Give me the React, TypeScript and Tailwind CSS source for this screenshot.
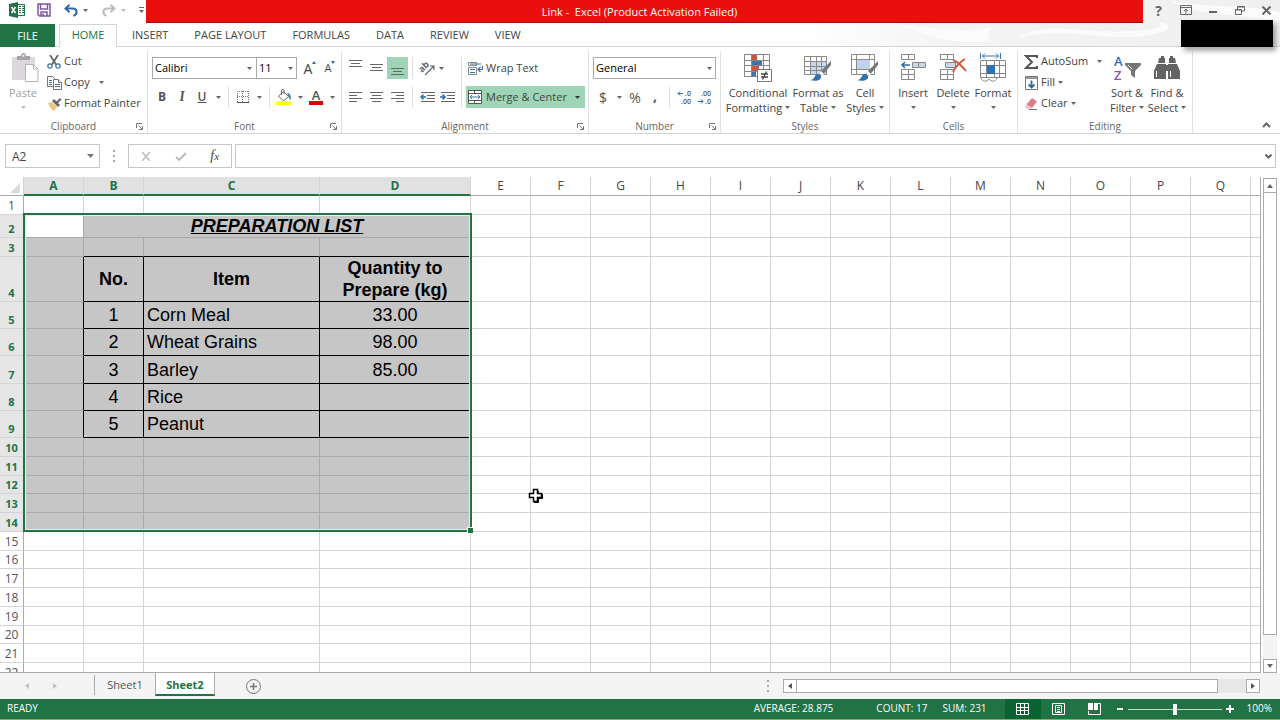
import type { ReactNode } from 'react';

const menuTabs = ['INSERT', 'PAGE LAYOUT', 'FORMULAS', 'DATA', 'REVIEW', 'VIEW'];

const columns = [
    { name: 'A', width: 'w-[60px]' },
    { name: 'B', width: 'w-[60px]' },
    { name: 'C', width: 'w-[176px]' },
    { name: 'D', width: 'w-[151px]' },
    ...['E', 'F', 'G', 'H', 'I', 'J', 'K', 'L', 'M', 'N', 'O', 'P', 'Q'].map((name) => ({ name, width: 'w-[60px]' })),
];

const rowHeights = [19, 23, 19, 45, 27, 27, 28, 27, 27, 19, 19, 18, 19, 19, 19, 18, 19, 19, 19, 18, 19, 19];

const cells: Record<string, string> = {
    B4: 'No.', C4: 'Item', D4: 'Quantity to Prepare (kg)',
    B5: '1', C5: 'Corn Meal', D5: '33.00',
    B6: '2', C6: 'Wheat Grains', D6: '98.00',
    B7: '3', C7: 'Barley', D7: '85.00',
    B8: '4', C8: 'Rice',
    B9: '5', C9: 'Peanut',
};

function Caret({ className = 'text-[#666]' }: { className?: string }) {
    return (
        <svg width="5" height="3" viewBox="0 0 5 3" className={`shrink-0 ${className}`}>
            <path d="M0 0h5L2.5 3z" fill="currentColor" />
        </svg>
    );
}

function CaretButton({ label, className = 'w-[12px]' }: { label: string; className?: string }) {
    return (
        <button aria-label={label} className={`flex h-[22px] items-center justify-center ${className}`}>
            <Caret />
        </button>
    );
}

function IconButton({ label, className = 'w-[20px]', children }: { label: string; className?: string; children: ReactNode }) {
    return (
        <button aria-label={label} className={`flex h-[22px] items-center justify-center ${className}`}>
            {children}
        </button>
    );
}

function Separator() {
    return <div className="mx-1 h-[22px] w-px bg-[#e1e1e1]" />;
}

function Group({ label, width, launcher, children }: { label: string; width: string; launcher?: boolean; children: ReactNode }) {
    return (
        <section aria-label={label} className={`flex shrink-0 flex-col ${width}`}>
            <div className="flex h-[82px] flex-col border-r border-[#e1e1e1]">
                <div className="flex grow">{children}</div>
                <div className="relative h-[14px] text-center text-[10px] leading-[14px] text-[#666]">
                    <span>{label}</span>
                    {launcher && (
                        <button aria-label={`${label} settings`} className="absolute right-1 top-1">
                            <svg width="7" height="7" viewBox="0 0 7 7" fill="none" stroke="#777">
                                <path d="M.5 5V.5H6M2.5 2.5l4 4M6.5 3v3.5H3" />
                            </svg>
                        </button>
                    )}
                </div>
            </div>
        </section>
    );
}

function BigButton({ icon, lines, width }: { icon: ReactNode; lines: string[]; width: string }) {
    return (
        <button className={`flex flex-col items-center whitespace-nowrap text-[11px] leading-[15px] ${width}`}>
            <span className="flex h-[34px] items-center justify-center">{icon}</span>
            <span>{lines[0]}</span>
            <span className="flex h-[15px] items-center gap-[3px]">
                {lines[1]}
                <Caret />
            </span>
        </button>
    );
}

function SmallButton({ icon, label, caret }: { icon: ReactNode; label: string; caret?: string }) {
    return (
        <button className="flex h-[21px] items-center whitespace-nowrap text-[11px]">
            <span className="mr-[2px] flex w-[16px] justify-center">{icon}</span>
            {label}
            {caret && <span className={caret}><Caret /></span>}
        </button>
    );
}

/* ---- icons ---- */

function ExcelIcon() {
    return (
        <svg width="16" height="16" viewBox="0 0 16 16">
            <path d="M9 2.5h6.5v11H9" fill="#fff" stroke="#217346" />
            <path d="M10 4.5h2m1 0h2M10 6.5h2m1 0h2M10 8.5h2m1 0h2M10 10.5h2m1 0h2" stroke="#217346" />
            <path d="M0 2l9-2v16l-9-2z" fill="#217346" />
            <path d="M2.5 5l4 6M6.5 5l-4 6" stroke="#fff" strokeWidth="1.5" />
        </svg>
    );
}

function SaveIcon() {
    return (
        <svg width="14" height="14" viewBox="0 0 14 14" fill="none" stroke="#8056a0" strokeWidth="1.5">
            <path d="M1 1h12v12H2.5L1 11.5zM3.5 1v5h7V1M4 13V9h6v4" />
            <path d="M6 10.5V13" />
        </svg>
    );
}

function UndoIcon({ color, flip }: { color: string; flip?: boolean }) {
    return (
        <svg width="14" height="13" viewBox="0 0 14 13" fill="none" stroke={color} strokeWidth="2" className={flip ? '-scale-x-100' : ''}>
            <path d="M2 4.5h6.5c5 0 5.5 5 1 7.5" />
            <path d="M5.5.8L1.5 4.5l4 3.7" />
        </svg>
    );
}

function PasteIcon() {
    return (
        <svg width="28" height="30" viewBox="0 0 28 30">
            <path d="M1 4h23v23H1z" fill="#dcd8dd" />
            <path d="M6 3h4c0-4 5-4 5 0h4v4H6z" fill="#a5a5a5" />
            <circle cx="12.5" cy="2.8" r="1" fill="#fff" />
            <path d="M14.5 11.5h8l4.5 4.5v12.5H14.5z" fill="#fff" stroke="#b5b5b5" />
            <path d="M22.5 11.5V16H27" fill="none" stroke="#b5b5b5" />
        </svg>
    );
}

function CutIcon() {
    return (
        <svg width="14" height="14" viewBox="0 0 14 14" fill="none">
            <path d="M3 0l6 9.5M11 0L5 9.5" stroke="#666" strokeWidth="1.8" />
            <circle cx="3" cy="11" r="2.2" stroke="#41719c" strokeWidth="1.2" />
            <circle cx="11" cy="11" r="2.2" stroke="#41719c" strokeWidth="1.2" />
        </svg>
    );
}

function CopyIcon() {
    return (
        <svg width="15" height="14" viewBox="0 0 15 14" fill="#fff" stroke="#777">
            <path d="M.5.5h5l2 2v8h-7z" />
            <path d="M2 4.5h3M2 6.5h3M2 8.5h3" stroke="#41719c" />
            <path d="M6.5 3.5h5l3 3v7h-8z" />
            <path d="M11.5 3.5v3h3" />
            <path d="M8 8.5h5M8 10.5h5" stroke="#41719c" />
        </svg>
    );
}

function PainterIcon() {
    return (
        <svg width="15" height="14" viewBox="0 0 15 14">
            <path d="M1 6l4-1 5 5-3 4c-2-1-4-3-6-8z" fill="#efc37f" />
            <path d="M5 4l2-2 6 6-2 2z" fill="#666" />
            <path d="M9 5l4-4 1.500 1.500-4 4z" fill="#666" />
        </svg>
    );
}

function LinesIcon({ lines }: { lines: [number, number, number][] }) {
    return (
        <svg width="13" height="12" viewBox="0 0 13 12" stroke="#666">
            {lines.map(([x1, x2, y]) => (
                <path key={y} d={`M${x1} ${y}.5H${x2}`} />
            ))}
        </svg>
    );
}

function IndentIcon({ right }: { right?: boolean }) {
    return (
        <svg width="15" height="12" viewBox="0 0 15 12" fill="none" stroke="#666">
            <path d="M1 1.5h14M7 4.5h8M7 7.5h8M1 10.5h14" />
            {right
                ? <path d="M0 6h5M2.5 3.5L5 6 2.5 8.5" stroke="#2f6aa8" strokeWidth="1.5" />
                : <path d="M6 6H1M3.5 3.5L1 6l2.5 2.5" stroke="#2f6aa8" strokeWidth="1.5" />}
        </svg>
    );
}

function BordersIcon() {
    return (
        <svg width="12" height="12" viewBox="0 0 12 12" fill="none" stroke="#777">
            <path d="M0 .5h12M.5 0v12M11.5 0v12M0 5.5h12M5.5 0v12" strokeDasharray="1 1" />
            <path d="M0 11.5h12" stroke="#555" />
        </svg>
    );
}

function BucketIcon() {
    return (
        <svg width="16" height="16" viewBox="0 0 16 16">
            <path d="M2.5 7l5-4.5 5 5-5 4.5z" fill="#fff" stroke="#666" />
            <path d="M5.5 6V1.5c0-1.5 2.5-1.5 2.5 0V5" fill="none" stroke="#666" />
            <path d="M11 4c3 0 4.5 3 3.5 7-1-1-1.5-2-2-4z" fill="#41719c" />
            <path d="M0 12.5h15V16H0z" fill="#ffff00" />
        </svg>
    );
}

function OrientationIcon() {
    return (
        <svg width="16" height="15" viewBox="0 0 16 15" fill="none" stroke="#666" className="overflow-visible">
            <text x="0" y="9" fontSize="9" fontWeight="700" fill="#666" stroke="none" transform="rotate(-45 5 7)">ab</text>
            <path d="M6 14l9-9M11 5h4v4" strokeWidth="1.2" />
        </svg>
    );
}

function WrapIcon() {
    return (
        <svg width="16" height="15" viewBox="0 0 16 15" fill="none" stroke="#41719c">
            <path d="M.5 1.5h8v3h-8zM.5 6.5h8v7h-8z" stroke="#888" />
            <path d="M2 3h11M2 8.5h5M2 11.5h5" strokeWidth="1.2" />
            <path d="M14.5 5v3.5H10M12.5 6L10 8.5l2.5 2.5" strokeWidth="1.2" />
        </svg>
    );
}

function MergeIcon() {
    return (
        <svg width="14" height="14" viewBox="0 0 14 14" fill="none" stroke="#555">
            <path d="M.5.5h13v13H.5z" fill="#fff" />
            <path d="M0 3.5h14M0 10.5h14M6.5 0v3.5M6.5 10.5V14" />
            <path d="M2 7h10M4 5L2 7l2 2M10 5l2 2-2 2" stroke="#41719c" />
        </svg>
    );
}

function DecimalIcon({ increase }: { increase?: boolean }) {
    return (
        <svg width="15" height="14" viewBox="0 0 15 14" fontSize="7" fontWeight="600" fill="#555" className="overflow-visible">
            <text x={increase ? 8 : 4} y="6">{increase ? '.0' : '.00'}</text>
            <text x={increase ? 4 : 8} y="14">{increase ? '.00' : '.0'}</text>
            {increase
                ? <path d="M6 3.5H1M3 1.5l-2 2 2 2" fill="none" stroke="#2f6aa8" />
                : <path d="M1 11.5h5M4 9.5l2 2-2 2" fill="none" stroke="#2f6aa8" />}
        </svg>
    );
}

function ConditionalIcon() {
    return (
        <svg width="28" height="29" viewBox="0 0 28 29" fill="none">
            <path d="M.5.5h25v22H.5zM.5 6.5h25M.5 11.5h25M.5 17.5h25M7.5.5v22M19.5.5v22" stroke="#888" />
            <path d="M8 1h5v5H8zM8 12h7v5H8z" fill="#d0553f" />
            <path d="M8 7h10v4H8zM8 18h4v4H8z" fill="#3c74b3" />
            <path d="M13.5 15.5h14v12h-14z" fill="#fff" stroke="#777" />
            <path d="M17 20h7M17 23h7M22.5 17.5l-4 8" stroke="#444" strokeWidth="1.3" />
        </svg>
    );
}

function Brush() {
    return (
        <>
            <path d="M27 7L15 19l3 3 9-11z" fill="#777" />
            <path d="M17 17l3 3-2 2-3-3z" fill="#fff" />
            <path d="M6 26c3 0 4-2 5-4s4-3 6 0c1 4-5 6-11 4z" fill="#2f72ad" />
        </>
    );
}

function FormatTableIcon() {
    return (
        <svg width="28" height="28" viewBox="0 0 28 28" fill="none">
            <path d="M6 8h17v12H6z" fill="#c8d8ec" />
            <path d="M.5 2.5h22v18H.5zM.5 7.5h22M.5 12.5h22M.5 16.5h22M6.5 2.5v18M12.5 2.5v18M17.5 2.5v18" stroke="#8a8a8a" />
            <Brush />
        </svg>
    );
}

function CellStylesIcon() {
    return (
        <svg width="28" height="28" viewBox="0 0 28 28" fill="none">
            <path d="M.5.5h23v20H.5zM.5 5.5h23M.5 15.5h23M5.5.5v20M18.5.5v20" stroke="#8a8a8a" />
            <path d="M6 6h13v9H6z" fill="#c0d3ee" />
            <Brush />
        </svg>
    );
}

function InsertIcon() {
    return (
        <svg width="26" height="28" viewBox="0 0 26 28" fill="#fff" stroke="#888">
            <path d="M1.5.5h13v5h-13zM8.5.5v5M1.5 15.5h13v10h-13zM8.5 15.5v10M1.5 20.5h13" />
            <path d="M12.5 8.5h13v5h-13z" fill="#c8d8e8" />
            <path d="M18.5 8.5v5" />
            <path d="M10 11H2M5 8l-3 3 3 3" fill="none" stroke="#2f6aa8" strokeWidth="1.5" />
        </svg>
    );
}

function DeleteIcon() {
    return (
        <svg width="28" height="28" viewBox="0 0 28 28" fill="#fff" stroke="#888">
            <path d="M1.5.5h13v5h-13zM8.5.5v5M1.5 15.5h13v10h-13zM8.5 15.5v10M1.5 20.5h13" />
            <path d="M6.5 8.5h10v5h-10z" fill="#c8d8e8" />
            <path d="M14 6c5 2 9 6 13 11M26 5c-5 3-9 7-12 13" fill="none" stroke="#d2583c" strokeWidth="2" />
        </svg>
    );
}

function FormatIcon() {
    return (
        <svg width="28" height="30" viewBox="0 0 28 30" fill="none" stroke="#888">
            <path d="M1.5 0v6M21.5 0v6M3 3h17M6 .5L3.5 3 6 5.5M17 .5L19.5 3 17 5.5" stroke="#3c74b3" />
            <path d="M1.5 7.5h25v17h-25zM1.5 12.5h25M1.5 20.5h25M7.5 7.5v17M15.5 7.5v17M20.5 7.5v17" />
            <path d="M8 12h8v9H8z" fill="#2f6fba" stroke="none" />
            <path d="M2 25c1 4 6 4 8 1 2 3 7 3 8-1" fill="#fff" />
        </svg>
    );
}

function FillIcon() {
    return (
        <svg width="13" height="14" viewBox="0 0 13 14" fill="none">
            <path d="M.5.5h12v13H.5z" stroke="#777" />
            <path d="M1 1h11v2H1z" fill="#999" />
            <path d="M6.5 4.5v7M3.5 8.5l3 3 3-3" stroke="#2f6aa8" strokeWidth="1.8" />
        </svg>
    );
}

function EraserIcon() {
    return (
        <svg width="13" height="12" viewBox="0 0 13 12">
            <path d="M7 0l5 3.5L7 10 1.5 6.5z" fill="#e0798c" />
            <path d="M1.5 6.5L7 10l-1 1H2L0 9z" fill="#f1c4cb" />
            <path d="M4 11.5h8" stroke="#777" />
        </svg>
    );
}

function SigmaIcon() {
    return (
        <svg width="14" height="14" viewBox="0 0 14 14" fill="none" stroke="#555" strokeWidth="2">
            <path d="M13 3V1H2l6 6-6 6h11v-2" />
        </svg>
    );
}

function SortIcon() {
    return (
        <svg width="28" height="28" viewBox="0 0 28 28" fontSize="13" fontWeight="600" className="overflow-visible">
            <text x="1" y="12" fill="#2f6fba">A</text>
            <text x="1" y="26" fill="#8c4fb0">Z</text>
            <path d="M12 9h16v2l-6 6v7l-4-3v-4l-6-6z" fill="#777" />
            <path d="M15 11l4 4" stroke="#fff" />
        </svg>
    );
}

function BinocularsIcon() {
    return (
        <svg width="26" height="24" viewBox="0 0 26 24" fill="#636363">
            <path d="M5 2h2V0h3v2h1v5H4zM15 2h1V0h3v2h2l1 5h-7z" />
            <path d="M3 8h9v15H0v-8zM14 8h9l3 7v8H14z" />
            <path d="M11 9h4v6h-4z" />
            <path d="M2.5 15v6M16.5 15v6" stroke="#fff" />
        </svg>
    );
}

/* ---- page parts ---- */

function TitleBar() {
    return (
        <header className="relative">
            <svg className="absolute right-0 top-0 h-[46px] w-[480px]" viewBox="0 0 480 46" preserveAspectRatio="none">
                <defs>
                    <linearGradient id="fade">
                        <stop offset="0" stopColor="#fff" />
                        <stop offset=".3" stopColor="#f4f4f4" />
                        <stop offset="1" stopColor="#efefef" />
                    </linearGradient>
                </defs>
                <path d="M0 0h480v46H0z" fill="url(#fade)" />
                <path d="M100 25c30 2 60 8 92 3-5 6-6 12 2 13-50 4-60-5-94-16zM215 38c40-20 70-1 130-8 18-2 20-6 10-8 30 3 7 14-25 15-40 1-70-9-115 1zM370 0c20 8 80 4 110 12v9c-40-7-95-6-110-21z" fill="#fbfbfb" />
            </svg>

            <div className="relative flex h-6">
                <div className="flex w-[146px] shrink-0 items-start pl-[9px] pt-[2px]">
                    <div className="flex h-4 items-center">
                        <ExcelIcon />
                        <button aria-label="Save" className="ml-3"><SaveIcon /></button>
                        <button aria-label="Undo" className="ml-[13px]"><UndoIcon color="#3267a8" /></button>
                        <span className="ml-[5px]"><Caret /></span>
                        <button aria-label="Redo" className="ml-[14px]"><UndoIcon color="#bcbcbc" flip /></button>
                        <span className="ml-[5px]"><Caret className="text-[#bbb]" /></span>
                        <button aria-label="Customize toolbar" className="ml-[13px] flex flex-col gap-[2px]">
                            <span className="h-px w-[5px] bg-[#666]" />
                            <Caret />
                        </button>
                    </div>
                </div>
                <h1 className="h-[23px] grow border-b border-[#a50d0d] bg-[#eb0e0e] pr-[10px] text-center text-[11px] leading-[24px] text-white">
                    Link -&nbsp; Excel (Product Activation Failed)
                </h1>
                <div className="flex h-5 w-[137px] shrink-0 items-center justify-end text-[#666]">
                    <button aria-label="Help" className="w-[27px] text-[14px] font-bold">?</button>
                    <button aria-label="Ribbon display options" className="flex w-[27px] justify-center">
                        <svg width="12" height="10" viewBox="0 0 12 10" fill="none" stroke="currentColor">
                            <path d="M.5.5h11v9H.5zM0 2.5h12M6 8.5V4M4 6l2-2 2 2" />
                        </svg>
                    </button>
                    <button aria-label="Minimize" className="flex w-[27px] justify-center">
                        <span className="mt-1 h-[2px] w-2 bg-[#666]" />
                    </button>
                    <button aria-label="Restore" className="flex w-[27px] justify-center">
                        <svg width="10" height="9" viewBox="0 0 10 9" fill="none" stroke="currentColor">
                            <path d="M2.5 3V.5h7V5H7M.5 3.5h6v5h-6zM.5 4h6M2.5 1h7" />
                        </svg>
                    </button>
                    <button aria-label="Close" className="flex w-[27px] justify-center">
                        <svg width="9" height="9" viewBox="0 0 9 9" stroke="currentColor" strokeWidth="2">
                            <path d="M.5.5l8 8M8.5.5l-8 8" />
                        </svg>
                    </button>
                </div>
            </div>

            <nav className="relative flex h-[23px] items-stretch border-b border-[#d5d5d5] text-[11px] leading-[22px]">
                <button className="mr-1 h-[23px] w-[55px] bg-[#217346] text-white">FILE</button>
                <button className="mr-[2px] h-[23px] w-[58px] border-x border-t border-[#d5d5d5] bg-white pb-[2px] leading-[20px] text-[#217346]">HOME</button>
                {menuTabs.map((tab) => (
                    <button key={tab} className="px-[13px]">{tab}</button>
                ))}
            </nav>
            <div className="absolute bottom-0 right-[7px] h-[27px] w-[92px] bg-black shadow-[3px_4px_5px_rgba(0,0,0,0.35)]" />
        </header>
    );
}

function Ribbon() {
    return (
        <div className="flex h-[88px] border-b border-[#d5d5d5] pt-1">
            <Group label="Clipboard" width="w-[148px]" launcher>
                <button className="flex w-[46px] flex-col items-center text-[11px] leading-[15px] text-[#a0a0a0]">
                    <span className="flex h-[34px] items-center pl-[3px]"><PasteIcon /></span>
                    <span>Paste</span>
                    <span className="flex h-[15px] items-center"><Caret className="text-[#bbb]" /></span>
                </button>
                <div className="flex flex-col items-start">
                    <SmallButton icon={<CutIcon />} label="Cut" />
                    <SmallButton icon={<CopyIcon />} label="Copy" caret="ml-[9px]" />
                    <SmallButton icon={<PainterIcon />} label="Format Painter" />
                </div>
            </Group>

            <Group label="Font" width="w-[194px]" launcher>
                <div className="flex flex-col gap-[7px] pl-1 pt-[6px]">
                    <div className="flex">
                        <div className="relative flex items-center">
                            <select aria-label="Font name" className="h-[22px] w-[105px] appearance-none border border-[#ababab] bg-white pl-[2px] text-[11px] text-black">
                                <option>Calibri</option>
                            </select>
                            <span className="pointer-events-none absolute right-[5px]"><Caret /></span>
                        </div>
                        <div className="relative -ml-px flex items-center">
                            <select aria-label="Font size" className="h-[22px] w-[41px] appearance-none border border-[#ababab] bg-white pl-[2px] text-[11px] text-black">
                                <option>11</option>
                            </select>
                            <span className="pointer-events-none absolute right-1"><Caret /></span>
                        </div>
                        <IconButton label="Increase font size" className="ml-[3px] w-[20px] text-[14px]">
                            A<svg width="4" height="3" viewBox="0 0 4 3" className="mb-3"><path d="M0 3l2-3 2 3z" fill="#2f6aa8" /></svg>
                        </IconButton>
                        <IconButton label="Decrease font size" className="w-[20px] text-[11px]">
                            A<svg width="4" height="3" viewBox="0 0 4 3" className="mb-3"><path d="M0 0l2 3 2-3z" fill="#2f6aa8" /></svg>
                        </IconButton>
                    </div>
                    <div className="flex text-[12px] text-[#555]">
                        <IconButton label="Bold"><b>B</b></IconButton>
                        <IconButton label="Italic"><i className="font-serif text-[13px] font-bold">I</i></IconButton>
                        <IconButton label="Underline"><u className="font-semibold">U</u></IconButton>
                        <CaretButton label="Underline styles" />
                        <Separator />
                        <IconButton label="Borders"><BordersIcon /></IconButton>
                        <CaretButton label="Border styles" />
                        <Separator />
                        <IconButton label="Fill color"><BucketIcon /></IconButton>
                        <CaretButton label="Fill colors" />
                        <IconButton label="Font color">
                            <span className="flex h-4 w-[14px] flex-col items-center border-b-4 border-[#e00000] text-[13px] font-semibold leading-[12px]">A</span>
                        </IconButton>
                        <CaretButton label="Font colors" />
                    </div>
                </div>
            </Group>

            <Group label="Alignment" width="w-[247px]" launcher>
                <div className="flex pl-[3px] pt-[6px]">
                    <div className="flex flex-col gap-[7px]">
                        <div className="flex">
                            <IconButton label="Top align" className="w-[21px] pb-2"><LinesIcon lines={[[0, 13, 2], [2, 11, 5], [0, 13, 8]]} /></IconButton>
                            <IconButton label="Middle align" className="w-[21px]"><LinesIcon lines={[[0, 13, 2], [2, 11, 5], [0, 13, 8]]} /></IconButton>
                            <IconButton label="Bottom align" className="w-[21px] bg-[#9fd5b7] pt-2"><LinesIcon lines={[[0, 13, 2], [2, 11, 5], [0, 13, 8]]} /></IconButton>
                            <Separator />
                        </div>
                        <div className="flex">
                            <IconButton label="Align left" className="w-[21px]"><LinesIcon lines={[[0, 13, 1], [0, 8, 4], [0, 13, 7], [0, 8, 10]]} /></IconButton>
                            <IconButton label="Center" className="w-[21px]"><LinesIcon lines={[[0, 13, 1], [2, 11, 4], [0, 13, 7], [2, 11, 10]]} /></IconButton>
                            <IconButton label="Align right" className="w-[21px]"><LinesIcon lines={[[0, 13, 1], [5, 13, 4], [0, 13, 7], [5, 13, 10]]} /></IconButton>
                            <Separator />
                        </div>
                    </div>
                    <div className="flex w-[44px] flex-col gap-[7px]">
                        <div className="flex">
                            <IconButton label="Orientation"><OrientationIcon /></IconButton>
                            <CaretButton label="Orientation options" className="w-2" />
                        </div>
                        <div className="flex">
                            <IconButton label="Decrease indent"><IndentIcon /></IconButton>
                            <IconButton label="Increase indent"><IndentIcon right /></IconButton>
                        </div>
                    </div>
                    <div className="mr-1 h-[51px] w-px bg-[#e1e1e1]" />
                    <div className="flex flex-col gap-[7px] text-[11px]">
                        <button className="flex h-[22px] items-center gap-[2px] pl-[2px]"><WrapIcon />Wrap Text</button>
                        <button className="flex h-[22px] w-[119px] items-center gap-1 bg-[#9fd5b7] pl-[2px]">
                            <MergeIcon />Merge &amp; Center
                            <span className="ml-auto pr-[5px]"><Caret className="text-[#333]" /></span>
                        </button>
                    </div>
                </div>
            </Group>

            <Group label="Number" width="w-[132px]" launcher>
                <div className="flex flex-col gap-[7px] pl-1 pt-[6px]">
                    <div className="relative flex items-center">
                        <select aria-label="Number format" className="h-[22px] w-[123px] appearance-none border border-[#ababab] bg-white pl-[2px] text-[11px] text-black">
                            <option>General</option>
                        </select>
                        <span className="pointer-events-none absolute right-1"><Caret /></span>
                    </div>
                    <div className="flex text-[14px] text-[#555]">
                        <IconButton label="Accounting format">$</IconButton>
                        <CaretButton label="Accounting formats" />
                        <IconButton label="Percent style">%</IconButton>
                        <IconButton label="Comma style"><b className="pb-1">,</b></IconButton>
                        <Separator />
                        <IconButton label="Increase decimal"><DecimalIcon increase /></IconButton>
                        <IconButton label="Decrease decimal"><DecimalIcon /></IconButton>
                    </div>
                </div>
            </Group>

            <Group label="Styles" width="w-[169px]">
                <div className="flex pl-1">
                    <BigButton icon={<ConditionalIcon />} lines={['Conditional', 'Formatting']} width="w-[66px]" />
                    <BigButton icon={<FormatTableIcon />} lines={['Format as', 'Table']} width="w-[54px]" />
                    <BigButton icon={<CellStylesIcon />} lines={['Cell', 'Styles']} width="w-[40px]" />
                </div>
            </Group>

            <Group label="Cells" width="w-[128px]">
                <div className="flex pl-[3px]">
                    <BigButton icon={<InsertIcon />} lines={['Insert']} width="w-[40px]" />
                    <BigButton icon={<DeleteIcon />} lines={['Delete']} width="w-[40px]" />
                    <BigButton icon={<FormatIcon />} lines={['Format']} width="w-[40px]" />
                </div>
            </Group>

            <Group label="Editing" width="w-[175px]">
                <div className="flex w-[89px] flex-col items-start pl-[5px]">
                    <SmallButton icon={<SigmaIcon />} label="AutoSum" caret="ml-[9px]" />
                    <SmallButton icon={<FillIcon />} label="Fill" caret="ml-[3px]" />
                    <SmallButton icon={<EraserIcon />} label="Clear" caret="ml-[3px]" />
                </div>
                <BigButton icon={<SortIcon />} lines={['Sort &', 'Filter']} width="w-[40px]" />
                <BigButton icon={<BinocularsIcon />} lines={['Find &', 'Select']} width="w-[40px]" />
            </Group>

            <button aria-label="Collapse ribbon" className="ml-auto self-end pb-[5px] pr-[9px]">
                <svg width="9" height="6" viewBox="0 0 9 6" fill="none" stroke="#666" strokeWidth="2">
                    <path d="M1 5l3.5-3.5L8 5" />
                </svg>
            </button>
        </div>
    );
}

function Dots() {
    return (
        <span className="flex flex-col gap-[3px]">
            <span className="size-[2px] bg-[#aaa]" />
            <span className="size-[2px] bg-[#aaa]" />
            <span className="size-[2px] bg-[#aaa]" />
        </span>
    );
}

function FormulaBar() {
    return (
        <div className="flex h-[43px] pb-[9px] pl-[5px] pr-1 pt-[10px]">
            <div className="relative flex items-center">
                <input aria-label="Name box" defaultValue="A2" className="h-6 w-[95px] border border-[#c6c6c6] pl-[6px] text-[12px] text-[#444]" />
                <svg width="7" height="4" viewBox="0 0 7 4" className="absolute right-[6px]"><path d="M0 0h7L3.5 4z" fill="#777" /></svg>
            </div>
            <div className="flex w-7 items-center justify-center"><Dots /></div>
            <div className="mr-[3px] flex w-[104px] items-center justify-around border border-[#c6c6c6]">
                <button aria-label="Cancel">
                    <svg width="10" height="9" viewBox="0 0 10 9" stroke="#bdbdbd" strokeWidth="1.5"><path d="M1 0l8 9M9 0L1 9" /></svg>
                </button>
                <button aria-label="Enter">
                    <svg width="12" height="9" viewBox="0 0 12 9" fill="none" stroke="#bdbdbd" strokeWidth="2"><path d="M1 5l3 3 7-7" /></svg>
                </button>
                <button aria-label="Insert function" className="font-['Liberation_Serif',serif] text-[14px] italic leading-none text-[#444]">
                    f<span className="text-[11px]">x</span>
                </button>
            </div>
            <div className="relative flex grow items-center">
                <input aria-label="Formula bar" className="h-6 w-full border border-[#c6c6c6] px-2 text-[12px]" />
                <svg width="7" height="5" viewBox="0 0 7 5" fill="none" stroke="#666" strokeWidth="2" className="absolute right-1"><path d="M.5.5l3 3 3-3" /></svg>
            </div>
        </div>
    );
}

function Cell({ col, row }: { col: string; row: number }) {
    const selected = row >= 2 && row <= 14 && 'ABCD'.includes(col);
    const inList = row >= 4 && row <= 9;
    const blackRight = inList && 'ABC'.includes(col);
    const blackBottom = row >= 3 && row <= 9 && 'BCD'.includes(col);
    const line = selected ? 'border-r-[#aaa]' : 'border-r-[#d4d4d4]';
    const under = selected ? 'border-b-[#aaa]' : 'border-b-[#d4d4d4]';

    return (
        <td
            className={[
                'border-b border-r p-0 align-middle',
                selected && !(col === 'A' && row === 2) ? 'bg-[#c6c6c6]' : 'bg-white',
                blackRight ? 'border-r-black' : line,
                blackBottom ? 'border-b-black' : under,
                col === 'C' && row > 4 ? 'pl-[3px] text-left' : 'text-center',
                row === 4 ? 'font-bold leading-[22px]' : 'leading-[18px]',
            ].join(' ')}
        >
            {cells[`${col}${row}`]}
        </td>
    );
}

function Sheet() {
    return (
        <div className="flex min-h-0 grow">
            <div className="relative min-w-0 grow overflow-hidden border-b border-r border-[#ababab]">
                <table className="w-full table-fixed border-separate border-spacing-0 text-[18px] text-black font-['Liberation_Sans',Arial,sans-serif]">
                    <thead className="text-[12px] font-['Open_Sans',sans-serif]">
                        <tr className="h-[19px] leading-[16px]">
                            <th className="w-6 border-b border-r border-b-[#ababab] border-r-[#d4d4d4] p-0">
                                <svg width="10" height="10" viewBox="0 0 10 10" className="ml-[10px] mt-1"><path d="M10 0v10H0z" fill="#dadada" /></svg>
                            </th>
                            {columns.map(({ name, width }) => (
                                <th
                                    key={name}
                                    className={`border-r border-r-[#d4d4d4] p-0 ${width} ${
                                        'ABCD'.includes(name)
                                            ? 'border-b-2 border-b-[#217346] bg-[#e1e1e1] text-[#217346]'
                                            : 'border-b border-b-[#ababab] font-normal text-[#444]'
                                    }`}
                                >
                                    {name}
                                </th>
                            ))}
                            <th className="border-b border-[#ababab] p-0" />
                        </tr>
                    </thead>
                    <tbody>
                        {rowHeights.map((height, i) => {
                            const row = i + 1;
                            const selected = row >= 2 && row <= 14;
                            return (
                                <tr key={row} style={{ height }}>
                                    <th
                                        className={`border-b border-r border-b-[#d4d4d4] border-r-[#ababab] p-0 align-bottom leading-[17px] font-['Open_Sans',sans-serif] ${
                                            selected ? 'bg-[#e6e6e6] text-[11px] text-[#217346]' : 'text-[12px] font-normal text-[#555]'
                                        }`}
                                    >
                                        {row}
                                    </th>
                                    {row === 2 ? (
                                        <>
                                            <Cell col="A" row={2} />
                                            <td colSpan={3} className="border-b border-r border-[#aaa] bg-[#c6c6c6] p-0 text-center font-bold italic leading-[20px] underline">
                                                PREPARATION LIST
                                            </td>
                                            {columns.slice(4).map(({ name }) => <Cell key={name} col={name} row={2} />)}
                                        </>
                                    ) : (
                                        columns.map(({ name }) => <Cell key={name} col={name} row={row} />)
                                    )}
                                    <td className="border-b border-[#d4d4d4] p-0" />
                                </tr>
                            );
                        })}
                    </tbody>
                </table>

                {/* Selection frame over A2:D14 */}
                <div className="pointer-events-none absolute left-[23px] top-[36px] h-[319px] w-[449px] border-2 border-[#217346]">
                    <div className="h-full border border-[#e4f0e9]" />
                    <div className="absolute -bottom-[3px] -right-[3px] size-[6px] border-l border-t border-white bg-[#217346]" />
                </div>
                <svg width="15" height="15" viewBox="0 0 15 15" className="pointer-events-none absolute left-[528px] top-[311px]">
                    <path d="M5.500 1.500h4v4h4v4h-4v4h-4v-4h-4v-4h4z" fill="#fff" stroke="#000" strokeWidth="1.500" />
                    <path d="M10.500 3v1.500M14.500 6v4.500h-4v4H6" fill="none" stroke="#000" />
                </svg>
            </div>

            {/* Vertical scroll bar */}
            <div className="ml-[2px] mr-[3px] mt-[1px] flex w-[14px] shrink-0 flex-col bg-[#f4f4f4]">
                <button aria-label="Scroll up" className="flex h-[15px] items-center justify-center border border-[#ababab] bg-white">
                    <svg width="6" height="4" viewBox="0 0 6 4"><path d="M0 4l3-4 3 4z" fill="#666" /></svg>
                </button>
                <div className="mb-6 grow border-x border-b border-[#ababab] bg-white" />
                <button aria-label="Scroll down" className="flex h-[14px] items-center justify-center border border-[#ababab] bg-white">
                    <svg width="6" height="4" viewBox="0 0 6 4"><path d="M0 0h6L3 4z" fill="#666" /></svg>
                </button>
            </div>
        </div>
    );
}

function SheetTabs() {
    return (
        <div className="flex h-[26px] shrink-0 bg-[#f4f4f4] text-[11px]">
            <div className="flex w-[94px] items-center pl-[25px] text-[#c0c0c0]">
                <button aria-label="Previous sheet"><svg width="4" height="6" viewBox="0 0 4 6"><path d="M4 0v6L0 3z" fill="currentColor" /></svg></button>
                <button aria-label="Next sheet" className="ml-6"><svg width="4" height="6" viewBox="0 0 4 6"><path d="M0 0v6l4-3z" fill="currentColor" /></svg></button>
            </div>
            <button className="mb-1 mt-[2px] w-[61px] border-l border-[#ababab] text-[#555]">Sheet1</button>
            <button className="h-[23px] w-[60px] border-x border-b-2 border-x-[#ababab] border-b-[#217346] bg-white pt-[3px] font-bold text-[#217346]">Sheet2</button>
            <button aria-label="New sheet" className="ml-[31px]">
                <svg width="15" height="15" viewBox="0 0 15 15" fill="none" stroke="#777"><circle cx="7.5" cy="7.5" r="7" /><path d="M7.5 4v7M4 7.5h7" strokeWidth="1.5" /></svg>
            </button>
            <div className="ml-auto flex items-center">
                <Dots />
            </div>
            <div className="ml-[14px] mr-5 mt-[6px] flex h-[14px] w-[477px] bg-[#e8e8e8]">
                <button aria-label="Scroll left" className="flex w-[14px] items-center justify-center border border-[#ababab] bg-white">
                    <svg width="4" height="6" viewBox="0 0 4 6"><path d="M4 0v6L0 3z" fill="#555" /></svg>
                </button>
                <div className="mr-7 grow border-y border-r border-[#ababab] bg-white" />
                <button aria-label="Scroll right" className="flex w-[14px] items-center justify-center border border-[#ababab] bg-white">
                    <svg width="4" height="6" viewBox="0 0 4 6"><path d="M0 0v6l4-3z" fill="#555" /></svg>
                </button>
            </div>
        </div>
    );
}

function StatusBar() {
    return (
        <footer className="flex h-[21px] shrink-0 items-stretch border-b border-[#8fa673] bg-[#217346] pl-[7px] pr-2 text-[10px] leading-[19px] text-white">
            <span>READY</span>
            <span className="ml-auto">AVERAGE: 28.875</span>
            <span className="ml-[43px]">COUNT: 17</span>
            <span className="ml-[15px]">SUM: 231</span>
            <button aria-label="Normal view" className="ml-[18px] flex w-9 items-center justify-center bg-[#0a6332]">
                <svg width="13" height="12" viewBox="0 0 13 12" fill="none" stroke="#fff"><path d="M.5.5h12v11H.5zM.5 4.5h12M.5 7.5h12M4.5.5v11M8.5.5v11" /></svg>
            </button>
            <button aria-label="Page layout view" className="flex w-9 items-center justify-center">
                <svg width="13" height="12" viewBox="0 0 13 12" fill="none" stroke="#fff"><path d="M.5.5h12v11H.5zM3.5 2.5h6v7h-6zM5 4.5h3M5 6.5h3M5 8.5h3" /></svg>
            </button>
            <button aria-label="Page break view" className="flex w-9 items-center justify-center">
                <svg width="13" height="12" viewBox="0 0 13 12"><path d="M0 0h5v7H0zM6 0h4v7H6z" fill="#fff" /><path d="M10 .5h2.5v11H.5V8" fill="none" stroke="#fff" /></svg>
            </button>
            <button aria-label="Zoom out" className="flex w-[14px] items-center justify-center"><span className="h-[2px] w-[6px] bg-white" /></button>
            <input
                type="range"
                aria-label="Zoom"
                defaultValue={50}
                className="mx-px w-[94px] appearance-none bg-transparent [&::-webkit-slider-runnable-track]:h-px [&::-webkit-slider-runnable-track]:bg-[#c5e0cf] [&::-webkit-slider-thumb]:-mt-[5px] [&::-webkit-slider-thumb]:h-[11px] [&::-webkit-slider-thumb]:w-1 [&::-webkit-slider-thumb]:appearance-none [&::-webkit-slider-thumb]:bg-white"
            />
            <button aria-label="Zoom in" className="flex w-[14px] items-center justify-center">
                <svg width="8" height="8" viewBox="0 0 8 8" stroke="#fff" strokeWidth="2"><path d="M4 0v8M0 4h8" /></svg>
            </button>
            <span className="ml-[10px]">100%</span>
        </footer>
    );
}

export default function App() {
    return (
        <div className="flex h-screen flex-col overflow-hidden bg-white text-[#444] font-['Open_Sans','Noto_Sans',sans-serif]">
            <TitleBar />
            <Ribbon />
            <FormulaBar />
            <Sheet />
            <SheetTabs />
            <StatusBar />
        </div>
    );
}
